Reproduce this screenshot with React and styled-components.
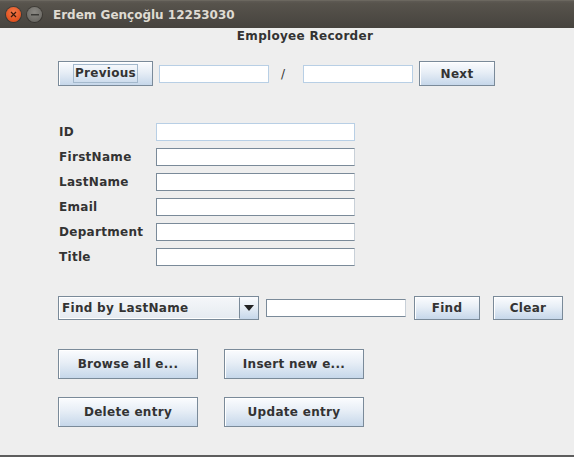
import React from 'react'
import styled, { createGlobalStyle } from 'styled-components'

const GlobalStyle = createGlobalStyle`
    html, body {
        margin: 0;
        padding: 0;
        background: #eeeeee;
    }
    * {
        box-sizing: border-box;
    }
`

const Window = styled.div`
    width: 574px;
    height: 457px;
    display: flex;
    flex-direction: column;
    overflow: hidden;
    font-family: 'DejaVu Sans', 'Liberation Sans', sans-serif;
    font-weight: bold;
    font-size: 12px;
    letter-spacing: 0.3px;
    color: #333333;
`

const TitleBar = styled.div`
    height: 28px;
    flex: none;
    display: flex;
    align-items: center;
    padding-left: 6px;
    gap: 6px;
    background: linear-gradient(to bottom, #5e5a54 0%, #57534c 10%, #46433e 100%);
    border-top: 1px solid #6b675f;
`

const WinButton = styled.div`
    width: 15px;
    height: 15px;
    border-radius: 50%;
    display: flex;
    align-items: center;
    justify-content: center;
    background: ${(p) =>
        p.close
            ? 'radial-gradient(circle at 50% 35%, #f2794a 0%, #e2521f 70%, #c8441a 100%)'
            : 'radial-gradient(circle at 50% 35%, #8a8883 0%, #6e6c67 70%, #5a5853 100%)'};
    box-shadow: 0 0 0 1px rgba(0, 0, 0, 0.25);
`

const TitleText = styled.span`
    margin-left: 5px;
    color: #dfdbd2;
    font-size: 12px;
    letter-spacing: 0;
`

const Content = styled.div`
    flex: 1;
    background: #eeeeee;
    display: flex;
    flex-direction: column;
`

const Heading = styled.div`
    height: 15px;
    line-height: 15px;
    margin-top: 1px;
    padding-left: 36px;
    text-align: center;
`

const NavRow = styled.div`
    display: flex;
    align-items: center;
    height: 25px;
    margin-top: 17px;
    padding-left: 58px;
`

const Button = styled.button`
    width: ${(p) => p.w}px;
    height: ${(p) => p.h || 25}px;
    flex: none;
    padding: 0;
    font-family: inherit;
    font-weight: bold;
    font-size: 12px;
    letter-spacing: 0.3px;
    color: #333333;
    border: 1px solid #7a8a99;
    background: linear-gradient(to bottom, #fbfcfe 0%, #e7eef6 45%, #c6d7ea 100%);
    box-shadow: inset 1px 1px 0 #ffffff;
    display: flex;
    align-items: center;
    justify-content: center;
`

const Focus = styled.span`
    border: 1px solid #a3b8cc;
    padding: 1px 1px;
    line-height: 15px;
`

const Field = styled.div`
    width: ${(p) => p.w}px;
    height: ${(p) => p.h || 18}px;
    flex: none;
    background: #ffffff;
    border: 1px solid ${(p) => (p.readOnly ? '#b8cfe5' : '#7a8a99')};
    ${(p) => (p.readOnly ? '' : 'border-right-color: #c8d0d8; box-shadow: inset 1px 1px 0 #ffffff;')}
`

const Slash = styled.span`
    width: 34px;
    padding-left: 12px;
    font-weight: normal;
`

const Form = styled.div`
    display: grid;
    grid-template-columns: 98px 199px;
    grid-auto-rows: 19px;
    row-gap: 6px;
    margin-top: 36px;
    padding-left: 58px;
    align-items: center;
`

const Label = styled.span`
    line-height: 19px;
    padding-top: 2px;
    padding-left: 1px;
`

const FindRow = styled.div`
    display: flex;
    align-items: center;
    height: 24px;
    margin-top: 30px;
    padding-left: 58px;
`

const Combo = styled.div`
    width: 201px;
    height: 24px;
    flex: none;
    display: flex;
    border: 1px solid #7a8a99;
    background: #eeeeee;
`

const ComboValue = styled.div`
    flex: 1;
    display: flex;
    align-items: center;
    padding-left: 2px;
    border: 1px solid #ffffff;
    border-right: 1px solid #7a8a99;
    background: linear-gradient(to bottom, #f4f6f9, #e6ebf1);
`

const ComboArrow = styled.div`
    width: 18px;
    display: flex;
    align-items: center;
    justify-content: center;
    background: linear-gradient(to bottom, #fbfcfe 0%, #e7eef6 45%, #c6d7ea 100%);
`

const ActionGrid = styled.div`
    display: grid;
    grid-template-columns: 140px 140px;
    grid-auto-rows: 30px;
    column-gap: 26px;
    row-gap: 18px;
    margin-top: 29px;
    padding-left: 58px;
`

const BottomStrip = styled.div`
    height: 2px;
    flex: none;
    background: #5d5d5d;
`

function App() {
    const fields = ['ID', 'FirstName', 'LastName', 'Email', 'Department', 'Title']

    return (
        <Window>
            <GlobalStyle />
            <TitleBar>
                <WinButton close>
                    <svg width='7' height='7' viewBox='0 0 7 7'>
                        <path d='M1 1L6 6M6 1L1 6' stroke='#3a1a0c' strokeWidth='1.2' />
                    </svg>
                </WinButton>
                <WinButton>
                    <svg width='8' height='2' viewBox='0 0 8 2'>
                        <rect x='0' y='0' width='8' height='1.5' fill='#3b3a37' />
                    </svg>
                </WinButton>
                <TitleText>Erdem Gençoğlu 12253030</TitleText>
            </TitleBar>
            <Content>
                <Heading>Employee Recorder</Heading>
                <NavRow>
                    <Button w={95}>
                        <Focus>Previous</Focus>
                    </Button>
                    <Field readOnly w={110} style={{ marginLeft: 6 }} />
                    <Slash>/</Slash>
                    <Field readOnly w={110} />
                    <Button w={76} style={{ marginLeft: 6 }}>
                        Next
                    </Button>
                </NavRow>
                <Form>
                    {fields.map((f, i) => (
                        <React.Fragment key={f}>
                            <Label>{f}</Label>
                            <Field w={199} readOnly={i === 0} />
                        </React.Fragment>
                    ))}
                </Form>
                <FindRow>
                    <Combo>
                        <ComboValue>Find by LastName</ComboValue>
                        <ComboArrow>
                            <svg width='10' height='6' viewBox='0 0 10 6'>
                                <path d='M0 0H10L5 6Z' fill='#222222' />
                            </svg>
                        </ComboArrow>
                    </Combo>
                    <Field w={140} style={{ marginLeft: 7 }} />
                    <Button w={66} h={24} style={{ marginLeft: 8 }}>
                        Find
                    </Button>
                    <Button w={70} h={24} style={{ marginLeft: 13 }}>
                        Clear
                    </Button>
                </FindRow>
                <ActionGrid>
                    <Button w={140} h={30}>Browse all e...</Button>
                    <Button w={140} h={30}>Insert new e...</Button>
                    <Button w={140} h={30}>Delete entry</Button>
                    <Button w={140} h={30}>Update entry</Button>
                </ActionGrid>
            </Content>
            <BottomStrip />
        </Window>
    )
}

export default App
